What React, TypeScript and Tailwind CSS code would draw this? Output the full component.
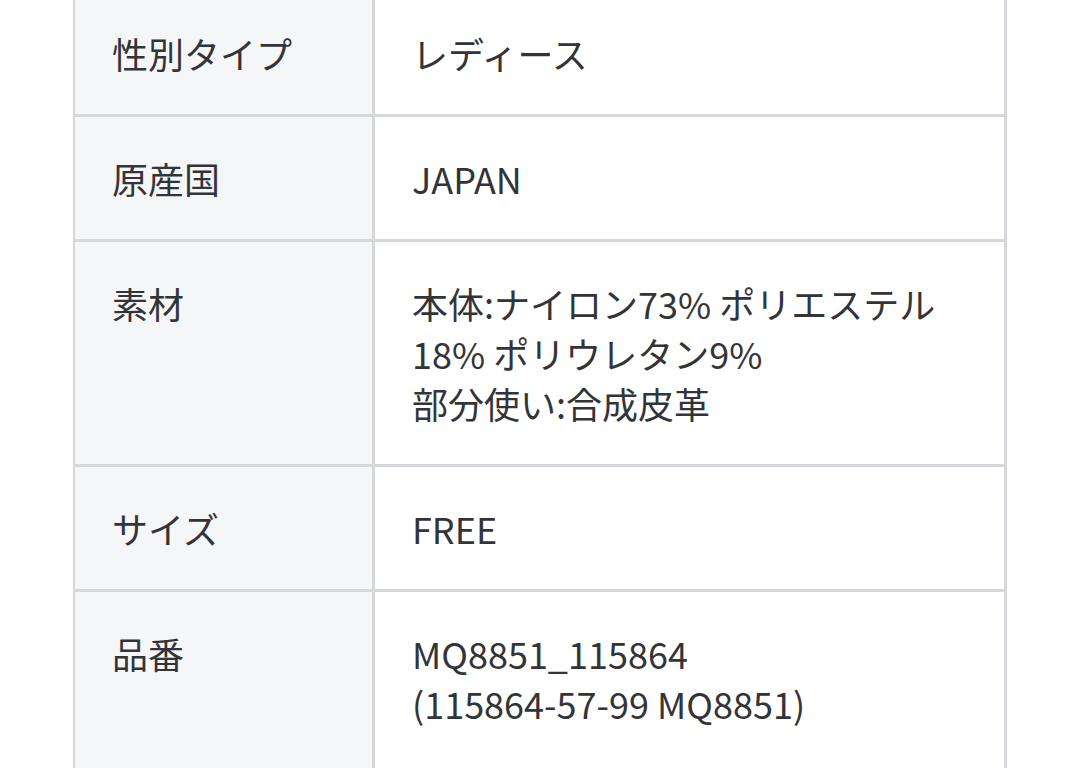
const rows: { label: string; value: string[] }[] = [
  { label: "性別タイプ", value: ["レディース"] },
  { label: "原産国", value: ["JAPAN"] },
  {
    label: "素材",
    value: ["本体:ナイロン73% ポリエステル", "18% ポリウレタン9%", "部分使い:合成皮革"],
  },
  { label: "サイズ", value: ["FREE"] },
  { label: "品番", value: ["MQ8851_115864", "(115864-57-99 MQ8851)"] },
]

export default function App() {
  return (
    <div
      className="h-[768px] w-[1080px] overflow-hidden bg-white text-[36px] leading-[50px] text-[#333438]"
      style={{ fontFamily: '"Noto Sans CJK JP", "Noto Sans", sans-serif' }}
    >
      <div className="ml-[73px] mt-[-11px] w-[934px] border-x-[2px] border-t-[3px] border-r-[3px] border-[#d6d7db]">
        {rows.map((row) => (
          <div key={row.label} className="flex border-b-[3px] border-[#d6d7db]">
            <div className="w-[300px] shrink-0 border-r-[3px] border-[#d6d7db] bg-[#f5f6f8] px-[37px] py-[36px]">
              {row.label}
            </div>
            <div className="flex-1 px-[37px] py-[36px] pb-[36px]">
              {row.value.map((line) => (
                <div key={line}>{line}</div>
              ))}
              {row.label === "品番" && <div className="h-[100px]" />}
            </div>
          </div>
        ))}
      </div>
    </div>
  )
}
